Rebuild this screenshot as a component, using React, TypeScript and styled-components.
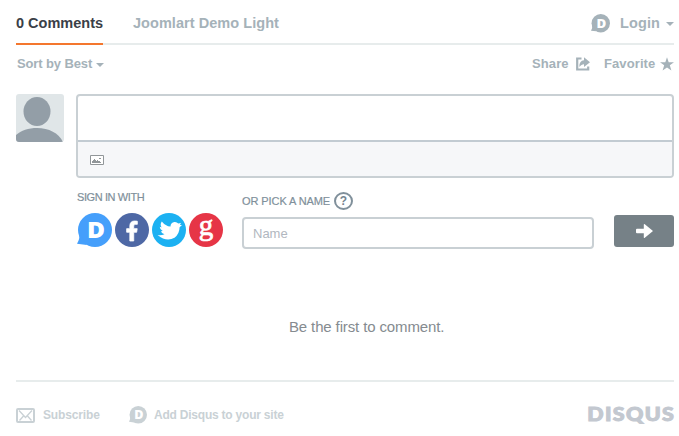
import React from "react";
import styled, { createGlobalStyle } from "styled-components";
import { FaFacebookF } from "react-icons/fa";

const GlobalStyle = createGlobalStyle`
  * { box-sizing: border-box; }
  body { margin: 0; background: #fff; overflow: hidden; font-family: "Liberation Sans", Arial, sans-serif; }
  svg { display: block; flex: none; overflow: visible; }
`;

const Page = styled.main`
  display: flex;
  flex-direction: column;
  width: 679px;
  padding: 0 5px 0 16px;
`;

const Label = styled.span<{ $w: number; $size: number; $color?: string; $bold?: boolean; $track?: number; $stroke?: number }>`
  flex: none;
  width: ${(p) => p.$w}px;
  font-size: ${(p) => p.$size}px;
  font-weight: ${(p) => (p.$bold ? 700 : 400)};
  color: ${(p) => p.$color ?? "#a5b2b9"};
  letter-spacing: ${(p) => p.$track ?? 0}px;
  -webkit-text-stroke: ${(p) => p.$stroke ?? 0}px currentColor;
  white-space: nowrap;
  line-height: 20px;
`;

const Header = styled.header`
  display: flex;
  height: 45px;
  border-bottom: 2px solid #e7ecec;
`;

const Tab = styled.div<{ $active?: boolean }>`
  height: 45px;
  padding-top: 13px;
  margin-right: 30px;
  border-bottom: 2px solid ${(p) => (p.$active ? "#f4772e" : "transparent")};
`;

const Login = styled.div`
  display: flex;
  align-items: center;
  height: 20px;
  margin: 13px 0 0 auto;
`;

const Caret = styled.i<{ $gap: number }>`
  margin: 2px 0 0 ${(p) => p.$gap}px;
  border: 4px solid transparent;
  border-top-color: #a5b2b9;
  border-bottom: 0;
`;

const Toolbar = styled.nav`
  display: flex;
  align-items: center;
  height: 20px;
  margin-top: 9px;
  padding-left: 1px;
`;

const Actions = styled.div`
  display: flex;
  align-items: center;
  margin-left: auto;
`;

const Composer = styled.section`
  display: flex;
  gap: 12px;
  margin-top: 20px;
`;

const Avatar = styled.div`
  width: 48px;
  height: 48px;
  border-radius: 3px;
  overflow: hidden;
`;

const Editor = styled.div`
  flex: 1;
  height: 84px;
  border: 2px solid #c9d0d4;
  border-radius: 4px;
  overflow: hidden;
`;

const Draft = styled.div`
  height: 46px;
  border-bottom: 2px solid #c2cbd2;
`;

const Media = styled.div`
  height: 34px;
  padding: 13px 12px;
  background: #f6f7f9;
`;

const Auth = styled.section`
  display: flex;
  margin: 9px 0 0 61px;
  height: 62px;
`;

const SignIn = styled.div`
  width: 165px;
`;

const Socials = styled.div`
  display: flex;
  gap: 3px;
  margin-top: 6px;
`;

const Social = styled.div<{ $bg: string }>`
  display: flex;
  align-items: center;
  justify-content: center;
  width: 34px;
  height: 34px;
  border-radius: 50%;
  color: #fff;
  background: ${(p) => p.$bg};
`;

const FacebookMark = styled(FaFacebookF)`
  margin-top: 2px;
  stroke: #fff;
  stroke-width: 20px;
`;

const Guest = styled.div`
  flex: 1;
`;

const GuestTitle = styled.div`
  display: flex;
  align-items: center;
  height: 19px;
  margin-top: 4px;
`;

const Help = styled.span`
  display: grid;
  place-items: center;
  width: 19px;
  height: 18px;
  margin-left: 4px;
  border: 2px solid #80909b;
  border-radius: 50%;
  color: #75848f;
  font: 700 12px/14px "Liberation Sans", Arial, sans-serif;
`;

const GuestRow = styled.div`
  display: flex;
  justify-content: space-between;
  margin-top: 5px;
`;

const NameField = styled.input`
  width: 352px;
  height: 32px;
  margin-top: 2px;
  padding: 0 9px;
  border: 2px solid #c9d0d4;
  border-radius: 4px;
  outline: none;
  font: 13px "Liberation Sans", Arial, sans-serif;
  &::placeholder { color: #b1b7c0; opacity: 1; }
`;

const Submit = styled.button`
  display: grid;
  place-items: center;
  width: 60px;
  height: 32px;
  padding: 0;
  border: 0;
  border-radius: 3px;
  background: #768187;
`;

const Empty = styled.p`
  display: flex;
  height: 20px;
  margin: 68px 0 0 273px;
`;

const Footer = styled.footer`
  display: flex;
  align-items: center;
  height: 68px;
  margin-top: 43px;
  border-top: 2px solid #e7ecec;
`;

const Spacer = styled.span<{ $w: number }>`
  flex: none;
  width: ${(p) => p.$w}px;
`;

const Wordmark = styled.svg`
  margin-left: auto;
`;

const Bubble = ({ size, color }: { size: number; color: string }) => (
  <svg width={size} height={(size * 34) / 35} viewBox="0 0 35 34">
    <circle cx="18" cy="17" r="17" fill={color} />
    <path d="M2.500 20Q3 26 0 30.700L10 32z" fill={color} />
    <text x="10" y="25" fontFamily="Open Sans, sans-serif" fontWeight="800" fontSize="22.500" textLength="18" lengthAdjust="spacingAndGlyphs" fill="#fff">D</text>
  </svg>
);

export default function App() {
  return (
    <>
      <GlobalStyle />
      <Page>
        <Header>
          <Tab $active><Label as="div" $w={87} $size={14.5} $bold $color="#3a4047" $track={0}>0 Comments</Label></Tab>
          <Tab><Label as="div" $w={148} $size={14.5} $bold $track={0.05}>Joomlart Demo Light</Label></Tab>
          <Login>
            <Bubble size={19} color="#a5b2b9" />
            <Spacer $w={10} />
            <Label $w={40} $size={14.5} $bold $track={0.12}>Login</Label>
            <Caret $gap={6} />
          </Login>
        </Header>

        <Toolbar>
          <Label $w={75} $size={13} $bold $track={-0.12}>Sort by Best</Label>
          <Caret $gap={4} />
          <Actions>
            <Label $w={37} $size={13} $bold $track={0.1}>Share</Label>
            <Spacer $w={7} />
            <svg width="14" height="14" viewBox="0 0 14 14">
              <path d="M5.500 1.500H1.200v11h11V9.500" fill="none" stroke="#a5b2b9" strokeWidth="2.200" />
              <path d="M8 .3l6 5-6 4.800V7.200C6 7.200 5 8 3.500 10 3 6 5 3.300 8 3.200z" fill="#a5b2b9" />
            </svg>
            <Spacer $w={14} />
            <Label $w={52} $size={13} $bold $track={0.1}>Favorite</Label>
            <Spacer $w={4} />
            <svg width="14" height="14" viewBox="0 0 14 14">
              <path d="M7 .3l1.700 4.900H14L9.800 8.300l1.600 5.200L7 10.400l-4.400 3.100 1.600-5.200L0 5.200h5.300z" fill="#a5b2b9" />
            </svg>
          </Actions>
        </Toolbar>

        <Composer>
          <Avatar>
            <svg width="48" height="48" viewBox="0 0 48 48">
              <path d="M0 0h48v48H0z" fill="#e0e6e8" />
              <ellipse cx="21" cy="17.500" rx="13.500" ry="14.500" fill="#939ea7" />
              <path d="M0 41C5 36.500 12.500 34 21 34c12 0 21.500 5 26 14H0z" fill="#939ea7" />
            </svg>
          </Avatar>
          <Editor>
            <Draft />
            <Media>
              <svg width="14" height="10" viewBox="0 0 14 10">
                <path d="M.5.5h13v9H.5z" fill="#fff" stroke="#919699" />
                <path d="M2 8V6h1V5h1V4h1v1h1v1h1V5h1v1h2v1h1v1zM9 3h2v1H9z" fill="#919699" />
              </svg>
            </Media>
          </Editor>
        </Composer>

        <Auth>
          <SignIn>
            <Label as="div" $w={68} $size={11} $color="#80909b" $track={-0.4} $stroke={0.2}>SIGN IN WITH</Label>
            <Socials>
              <Bubble size={35} color="#459ffb" />
              <Social $bg="#4e68a5"><FacebookMark size={20} /></Social>
              <Social $bg="#1cb1f2">
                <svg width="34" height="34" viewBox="0 0 34 34">
                  <path d="M5.600 22Q9.500 22.500 12.500 21.200Q9.600 20.800 9 18.200L10.700 18Q8 16.800 7.700 13.800L9.600 14.400Q7.700 11.600 9.800 8.400Q13.500 13 18.500 13.600Q18.500 9.500 22.500 9Q24.800 8.800 26.300 10.500L29 10L27.900 12L30 12L27.600 14.300Q27.500 21 22.500 24.800Q14.500 29.500 5.600 22z" fill="#fff" />
                </svg>
              </Social>
              <Social $bg="#e63546">
                <svg width="34" height="34" viewBox="0 0 34 34">
                  <text x="17" y="21.500" fontFamily="Liberation Serif, serif" fontSize="29" textAnchor="middle" fill="#fff" stroke="#fff" strokeWidth=".7">g</text>
                </svg>
              </Social>
            </Socials>
          </SignIn>
          <Guest>
            <GuestTitle>
              <Label $w={88} $size={11} $color="#80909b" $track={-0.08} $stroke={0.2}>OR PICK A NAME</Label>
              <Help>?</Help>
            </GuestTitle>
            <GuestRow>
              <NameField placeholder="Name" />
              <Submit aria-label="Submit">
                <svg width="18" height="16" viewBox="0 0 18 16">
                  <path d="M2 5.800h6.800V1.500Q9 .6 9.800 1.200L18 8 9.800 14.800Q9 15.400 8.800 14.500V10.200H2Q1 10.200 1 9.200V6.800Q1 5.800 2 5.800z" fill="#fff" />
                </svg>
              </Submit>
            </GuestRow>
          </Guest>
        </Auth>

        <Empty><Label $w={156} $size={15} $color="#858b90" $track={-0.13}>Be the first to comment.</Label></Empty>

        <Footer>
          <svg width="19" height="15" viewBox="0 0 19 15">
            <rect x="1" y="1" width="17" height="13" rx="1" fill="none" stroke="#c9d1d5" strokeWidth="2" />
            <path d="M3 2.500l6.500 7 6.500-7M3.500 12.500l4-4.500M15.500 12.500l-4-4.500" fill="none" stroke="#c9d1d5" strokeWidth="1.300" />
          </svg>
          <Spacer $w={8} />
          <Label $w={57} $size={12} $bold $color="#c9d1d5" $track={-0.15}>Subscribe</Label>
          <Spacer $w={29} />
          <Bubble size={18} color="#c9d1d5" />
          <Spacer $w={7} />
          <Label $w={131} $size={12} $bold $color="#c9d1d5" $track={-0.22}>Add Disqus to your site</Label>
          <Wordmark width="86" height="20" viewBox="0 0 86 20">
            <text x="-.8" y="16" fontFamily="Lato, sans-serif" fontWeight="900" fontSize="19" letterSpacing="1.200" textLength="88" lengthAdjust="spacingAndGlyphs" fill="#c3c8d0" stroke="#c3c8d0" strokeWidth="1">DISQUS</text>
          </Wordmark>
        </Footer>
      </Page>
    </>
  );
}
